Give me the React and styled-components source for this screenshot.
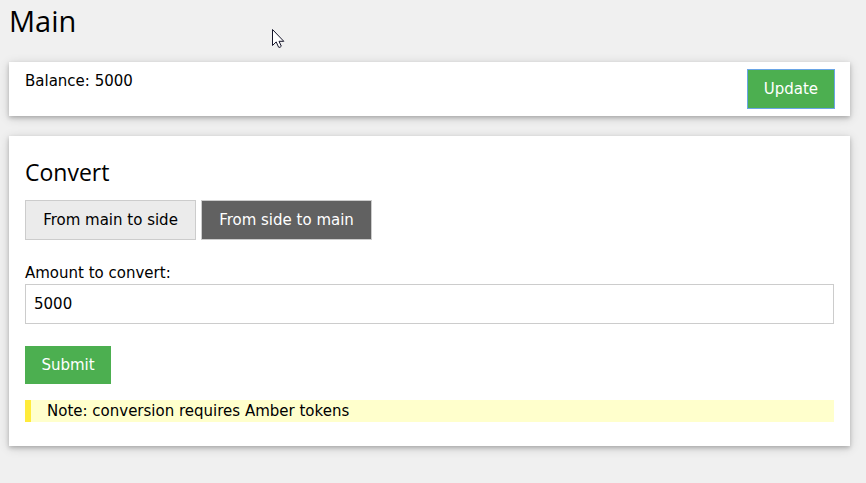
import React, { useState } from "react";
import styled, { createGlobalStyle, css } from "styled-components";

const GlobalStyle = createGlobalStyle`
  *, *::before, *::after { box-sizing: border-box; }
  body {
    margin: 0;
    background: #f0f0f0;
    color: #000;
    font-family: Verdana, "DejaVu Sans", sans-serif;
    font-size: 15px;
    line-height: 22px;
  }
`;

const headingFont = css`
  font-family: "Segoe UI", "Open Sans", sans-serif;
  font-weight: 400;
`;

const Page = styled.main`
  display: flex;
  flex-direction: column;
  gap: 20px;
  padding: 0 16px 20px 9px;
`;

const PageTitle = styled.h1`
  ${headingFont}
  margin: 0;
  font-size: 29px;
  line-height: 42px;
`;

const Card = styled.section`
  padding: 8px 16px;
  background: #fff;
  box-shadow: 0 2px 4px 0 rgba(0, 0, 0, 0.2), 0 2px 10px 0 rgba(0, 0, 0, 0.16);
`;

const BalanceCard = styled(Card)`
  display: flex;
  justify-content: space-between;
  align-items: flex-start;
`;

const ConvertCard = styled(Card)`
  padding-bottom: 24px;
`;

const CardTitle = styled.h2`
  ${headingFont}
  margin: 10px 0;
  font-size: 23px;
  line-height: 36px;
`;

const Button = styled.button`
  min-width: 86px;
  padding: 8px 16px;
  border: 0;
  background: #4caf50;
  color: #fff;
  font: inherit;
  cursor: pointer;
  outline: ${(p) => (p.$highlighted ? "1px solid #6aa5e6" : "none")};
`;

const Directions = styled.div`
  display: flex;
  gap: 5px;
  margin-bottom: 22px;
`;

const DirectionButton = styled(Button)`
  min-width: 171px;
  border: 1px solid #ccc;
  background: ${(p) => (p.$active ? "#616161" : "#ebebeb")};
  color: ${(p) => (p.$active ? "#fff" : "#000")};
`;

const Label = styled.label`
  display: block;
`;

const Input = styled.input`
  display: block;
  width: 100%;
  height: 40px;
  margin-bottom: 22px;
  padding: 8px;
  border: 1px solid #ccc;
  border-radius: 0;
  background: #fff;
  color: #000;
  font: inherit;
`;

const Note = styled.p`
  margin: 16px 0 0;
  padding: 0 16px;
  border-left: 6px solid #ffeb3b;
  background: #ffffcc;
`;

const Pointer = styled.svg`
  position: absolute;
  top: 29px;
  left: 272px;
  pointer-events: none;
`;

export default function App() {
  const [direction, setDirection] = useState("main");
  const [amount, setAmount] = useState("5000");

  return (
    <>
      <GlobalStyle />
      <Page>
        <PageTitle>Main</PageTitle>
        <BalanceCard>
          <span>Balance: 5000</span>
          <Button type="button" $highlighted>Update</Button>
        </BalanceCard>
        <ConvertCard>
          <CardTitle>Convert</CardTitle>
          <form onSubmit={(e) => e.preventDefault()}>
            <Directions>
              <DirectionButton type="button" $active={direction === "side"} onClick={() => setDirection("side")}>
                From main to side
              </DirectionButton>
              <DirectionButton type="button" $active={direction === "main"} onClick={() => setDirection("main")}>
                From side to main
              </DirectionButton>
            </Directions>
            <Label htmlFor="amount">Amount to convert:</Label>
            <Input id="amount" value={amount} onChange={(e) => setAmount(e.target.value)} />
            <Button type="submit">Submit</Button>
          </form>
          <Note>Note: conversion requires Amber tokens</Note>
        </ConvertCard>
      </Page>
      <Pointer width="13" height="20" viewBox="0 0 13 20" aria-hidden="true">
        <path d="M.5.5v16l3.7-3.6 2.4 5.3q1.5.8 2.7-1L7 12.3h4.8z" fill="#fff" stroke="#15152a" strokeWidth="1" />
      </Pointer>
    </>
  );
}
